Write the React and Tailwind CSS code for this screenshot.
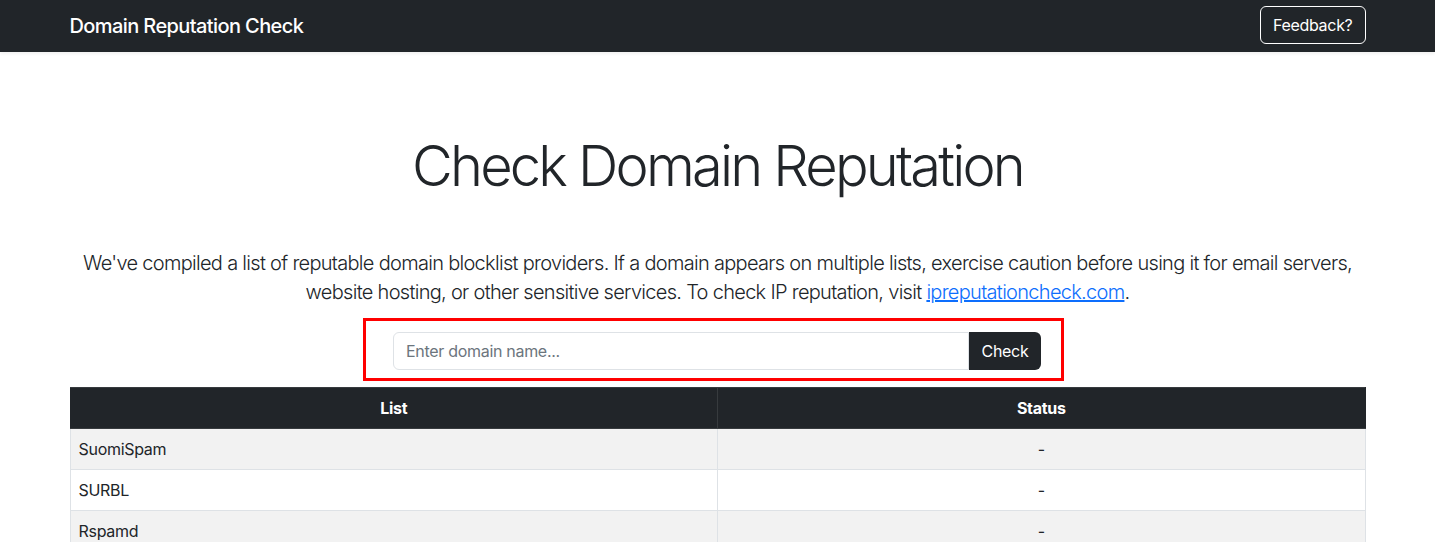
import React from "react";

const rows = ["SuomiSpam", "SURBL", "Rspamd"];

export default function App() {
  return (
    <div className="min-h-screen bg-white text-[#212529]" style={{ fontFamily: "Inter, 'Noto Sans', sans-serif" }}>
      <nav className="bg-[#212529] h-[52px] shadow-[0_2px_3px_rgba(0,0,0,0.06)]">
        <div className="max-w-[1320px] mx-auto px-3 h-full flex items-center justify-between">
          <span className="text-white text-[20px] font-medium leading-[30px] tracking-[-0.6px]">Domain Reputation Check</span>
          <button className="text-white border border-white rounded-[6px] h-[38px] px-3 text-[16px] leading-6 mb-[2px] tracking-[-0.3px]">Feedback?</button>
        </div>
      </nav>
      <main className="max-w-[1320px] mx-auto px-3">
        <h1 className="text-center text-[56px] font-light leading-[1.2] mt-[81px] tracking-[-2.8px]">Check Domain Reputation</h1>
        <p className="text-center text-[20px] font-light leading-[29px] mt-[49px] tracking-[-0.7px]">
          We've compiled a list of reputable domain blocklist providers. If a domain appears on multiple lists, exercise caution before using it for email servers, website hosting, or other sensitive services. To check IP reputation, visit{" "}
          <a href="#" className="text-[#0d6efd] underline">ipreputationcheck.com</a>.
        </p>
        <div className="flex justify-center mt-[11px]">
          <div className="border-[3px] border-[#ff0000] pl-[27px] pr-[20px] pt-[11px] pb-[8px] mr-[8px]">
            <div className="flex w-[648px] h-[38px]">
              <input
                className="flex-1 min-w-0 border border-[#dee2e6] rounded-l-[6px] px-3 text-[16px] tracking-[-0.3px] text-[#212529] placeholder:text-[#6c757d] outline-none"
                placeholder="Enter domain name..."
              />
              <button className="bg-[#212529] text-white rounded-r-[6px] px-3 text-[16px] tracking-[-0.3px] w-[72px]">Check</button>
            </div>
          </div>
        </div>
        <table className="w-full mt-[6px] border-collapse text-[16px] tracking-[-0.3px]">
          <thead>
            <tr className="bg-[#212529] text-white">
              <th className="w-1/2 h-[41px] px-2 font-bold border border-[#373b3e] border-l-[#212529]">List</th>
              <th className="w-1/2 h-[41px] px-2 font-bold border border-[#373b3e] border-r-[#212529]">Status</th>
            </tr>
          </thead>
          <tbody>
            {rows.map((r, i) => (
              <tr key={r} className={i % 2 === 0 ? "bg-[#f2f2f2]" : "bg-white"}>
                <td className="h-[41px] px-2 border border-[#dee2e6] text-left">{r}</td>
                <td className="h-[41px] px-2 border border-[#dee2e6] text-center">-</td>
              </tr>
            ))}
          </tbody>
        </table>
      </main>
    </div>
  );
}
